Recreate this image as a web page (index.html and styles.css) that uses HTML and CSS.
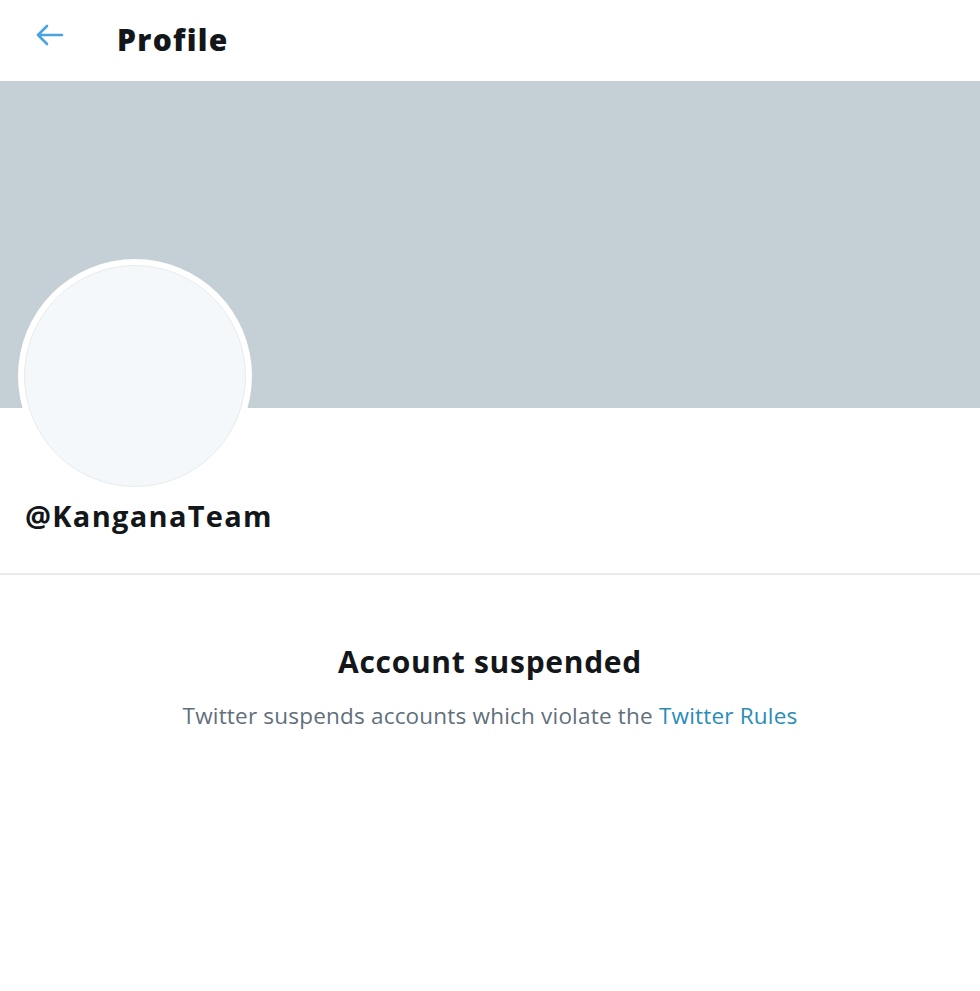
FILE: index.html
```html
<!DOCTYPE html>
<html>
<head>
<meta charset="utf-8">
<link rel="stylesheet" href="styles.css">
</head>
<body>
<div class="page">
  <header class="topbar">
    <div class="back">
      <svg width="30" height="24" viewBox="0 0 30 24"><path d="M28 12H4M13 3L4 12l9 9" fill="none" stroke="#4aa3df" stroke-width="2.6" stroke-linecap="round" stroke-linejoin="round"/></svg>
    </div>
    <h1 class="title">Profile</h1>
  </header>
  <div class="banner"></div>
  <div class="profile">
    <div class="avatar"><div class="avatar-inner"></div></div>
    <div class="handle">@KanganaTeam</div>
  </div>
  <div class="suspended">
    <h2 class="s-title">Account suspended</h2>
    <p class="s-text">Twitter suspends accounts which violate the <a href="#" class="s-link">Twitter Rules</a></p>
  </div>
</div>
</body>
</html>
```
FILE: styles.css
```css
html, body { margin: 0; padding: 0; background: #fff; }
body { font-family: "Open Sans", "Noto Sans", sans-serif; color: #14171a; }
.page { width: 980px; }
.topbar { height: 81px; display: flex; align-items: center; box-sizing: border-box; padding-left: 34px; padding-bottom: 2px; }
.back { width: 30px; height: 24px; display: flex; margin-top: -10px; }
.title { margin: 0 0 0 53px; font-size: 30px; font-weight: 800; letter-spacing: 1.3px; color: #14171a; }
.banner { height: 327px; background: #c4cfd6; }
.profile { height: 165px; padding-left: 18px; border-bottom: 2px solid #e9ecee; position: relative; }
.avatar { position: absolute; left: 18px; top: -149px; width: 234px; height: 234px; border-radius: 50%; background: #fff; display: flex; align-items: center; justify-content: center; }
.avatar-inner { width: 222px; height: 222px; border-radius: 50%; background: #f5f8fa; border: 1px solid #e6ecf0; box-sizing: border-box; }
.handle { position: absolute; left: 25px; top: 88px; font-size: 29px; font-weight: 700; letter-spacing: 1.3px; }
.suspended { text-align: center; padding-top: 67px; }
.s-title { margin: 0; font-size: 30px; font-weight: 700; line-height: 40px; letter-spacing: 0.7px; }
.s-text { margin: 19px 0 0; font-size: 22.5px; color: #5f6f7c; line-height: 30px; letter-spacing: 0.2px; }
.s-link { color: #2a8cb8; text-decoration: none; }
```
